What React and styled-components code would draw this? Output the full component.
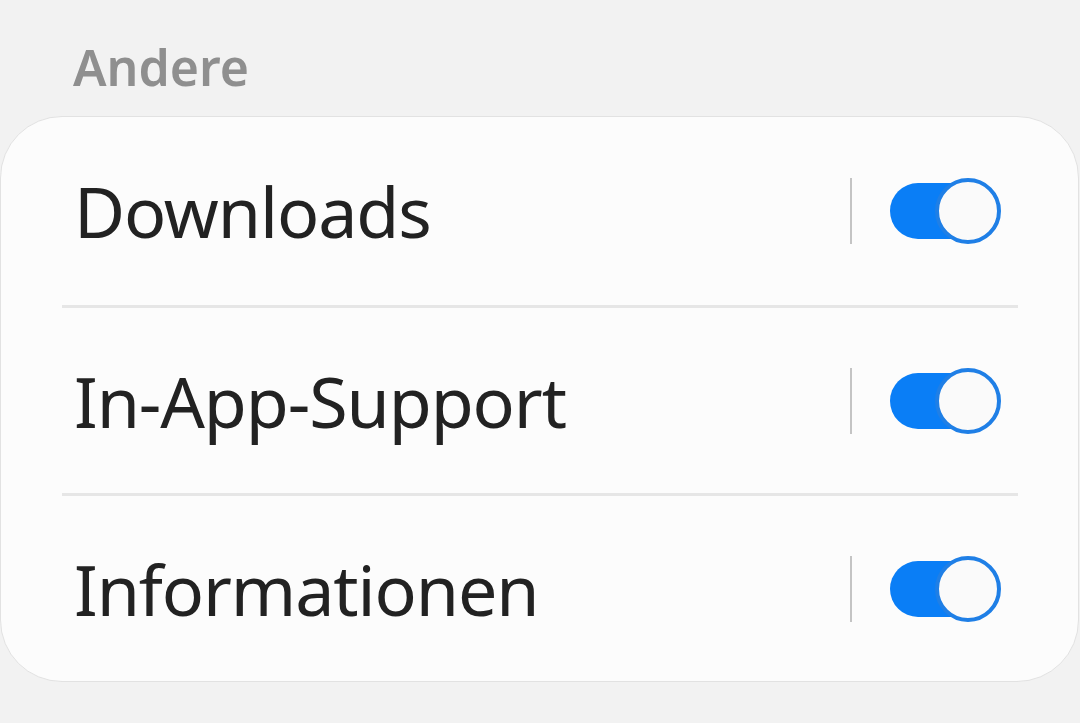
import React, { useState } from "react";
import styled, { createGlobalStyle } from "styled-components";

const GlobalStyle = createGlobalStyle`
  html, body {
    margin: 0;
    padding: 0;
    background: #f2f2f2;
  }
  body {
    font-family: "Noto Sans", Roboto, sans-serif;
  }
`;

const Page = styled.div`
  width: 1080px;
  height: 723px;
  overflow: hidden;
  background: #f2f2f2;
  box-sizing: border-box;
  padding-top: 34px;
`;

const SectionTitle = styled.div`
  padding-left: 73px;
  height: 66px;
  font-size: 50px;
  font-weight: 600;
  color: #8f8f8f;
  line-height: 66px;
`;

const Card = styled.div`
  margin: 16px 1px 0 0;
  background: #fcfcfc;
  border: 1px solid #e2e2e2;
  border-radius: 62px;
  overflow: hidden;
`;

const Row = styled.div`
  box-sizing: border-box;
  height: 188px;
  display: flex;
  align-items: center;
  margin: 0 60px 0 61px;
  padding-left: 12px;
  padding-right: 20px;
  border-top: ${ p => p.first ? "none" : "3px solid #e6e6e6" };
`;

const Label = styled.div`
  flex: 1;
  font-size: 70px;
  color: #222;
  letter-spacing: -1.1px;
`;

const Divider = styled.div`
  width: 2px;
  height: 66px;
  background: #c4c4c4;
  margin-right: 38px;
`;

const Track = styled.button`
  position: relative;
  width: 108px;
  height: 66px;
  padding: 0;
  border: none;
  background: transparent;
  cursor: pointer;
  &::before {
    content: "";
    position: absolute;
    left: 0;
    top: 5px;
    width: 100px;
    height: 56px;
    border-radius: 28px;
    background: ${ p => p.on ? "#0a7ef6" : "#b8b8b8" };
  }
`;

const Thumb = styled.span`
  position: absolute;
  top: 0;
  left: ${ p => p.on ? "45px" : "0" };
  width: 58px;
  height: 58px;
  border-radius: 50%;
  background: #fafafa;
  border: 4px solid ${ p => p.on ? "#1f7fe6" : "#b8b8b8" };
`;

const items = [ "Downloads", "In-App-Support", "Informationen" ];

export default function App ()
{
    const [ state, setState ] = useState( [ true, true, true ] );

    const toggle = ( i ) =>
    {
        const next = [ ...state ];
        next[ i ] = !next[ i ];
        setState( next );
    };

    return (
        <Page>
            <GlobalStyle />
            <SectionTitle>Andere</SectionTitle>
            <Card>
                {
                    items.map( ( name, i ) => (
                        <Row key={ name } first={ i === 0 }>
                            <Label>{ name }</Label>
                            <Divider />
                            <Track on={ state[ i ] } onClick={ () => toggle( i ) }>
                                <Thumb on={ state[ i ] } />
                            </Track>
                        </Row>
                    ) )
                }
            </Card>
        </Page>
    );
}
